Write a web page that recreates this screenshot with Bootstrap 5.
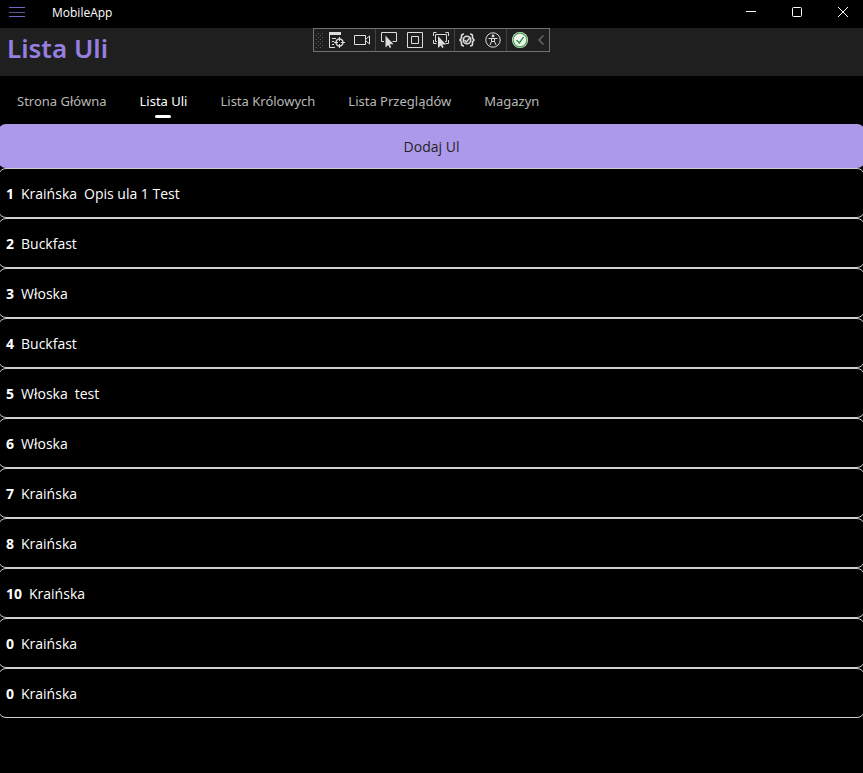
<!DOCTYPE html>
<html lang="pl" data-bs-theme="dark">
<head>
<meta charset="utf-8">
<meta name="viewport" content="width=device-width, initial-scale=1">
<title>MobileApp</title>
<link href="https://cdn.jsdelivr.net/npm/bootstrap@5.3.0/dist/css/bootstrap.min.css" rel="stylesheet">
<style>
body { background: #000; color: #fff; font-family: "Open Sans", "Noto Sans", sans-serif; font-size: 14px; line-height: 20px; }
svg { display: block; }
.icon-btn { background: none; border: 0; padding: 0; color: inherit; display: flex; align-items: center; justify-content: center; }
.title-bar { height: 28px; }
.menu-btn { width: 34px; height: 24px; color: #7a62c4; }
.app-name { font-size: 12px; line-height: 26px; margin-left: 18px; }
.win-btns { gap: 6px; }
.win-btn { width: 40px; height: 24px; }
.page-head { background: #1f1f1f; height: 48px; padding: 0 7px; }
.page-head h1 { color: #967fe0; font-size: 26px; line-height: 40px; font-weight: 600; font-family: "Noto Sans", sans-serif; }
.debug-bar { top: 0; height: 24px; width: 237px; background: #1f1f1f; border: 1px solid #707070; color: #dcdcdc; }
.debug-bar .icon-btn { width: 26px; height: 22px; flex: none; }
.debug-bar .icon-btn:first-of-type { width: 25px; }
.debug-bar .rule { width: 1px; height: 22px; background: #424242; }
.tabs { height: 48px; padding: 0 1px; gap: 1px; }
.tabs .nav-link { color: #b8b8b8; font-family: "Noto Sans", sans-serif; font-size: 13px; padding: 15px 16px 0; height: 48px; position: relative; }
.tabs .nav-link.active { color: #fff; }
.tabs .nav-link.active::after { content: ""; position: absolute; left: calc(50% - 8px); bottom: 6px; width: 16px; height: 3px; border-radius: 2px; background: #fff; }
.hive-area { overflow: hidden; }
.hive-area > * { margin: 0 -2px; }
.add-btn { background: #ac99ea; color: #242424; border: 0; border-radius: 8px; height: 44px; padding: 2px 0 0; font-size: 14px; line-height: 20px; width: calc(100% + 4px); }
.add-btn:hover { background: #b8a8ee; color: #242424; }
.hive { height: 50px; border: 1px solid #d0d0d0; border-radius: 8px; padding: 2px 7px 0; gap: 7px; }
</style>
</head>
<body>
<header>
  <div class="title-bar d-flex align-items-start">
    <button class="icon-btn menu-btn" type="button" aria-label="Menu"><svg width="16" height="12" fill="none" stroke="currentColor"><path d="M0 1.500h16M0 10.500h16"/><path d="M0 6.500h16" opacity=".8"/></svg></button>
    <span class="app-name">MobileApp</span>
    <div class="win-btns d-flex ms-auto">
      <button class="icon-btn win-btn" type="button" aria-label="Minimalizuj"><svg width="10" height="10" stroke="#fff"><path d="M0 4.500h10"/></svg></button>
      <button class="icon-btn win-btn" type="button" aria-label="Maksymalizuj"><svg width="10" height="10" fill="none" stroke="#fff"><rect x=".5" y=".5" width="9" height="9" rx="1"/></svg></button>
      <button class="icon-btn win-btn" type="button" aria-label="Zamknij"><svg width="10" height="10" stroke="#fff"><path d="M0 0l10 10M10 0L0 10"/></svg></button>
    </div>
  </div>
  <div class="page-head position-relative">
    <h1 class="m-0">Lista Uli</h1>
    <div class="debug-bar position-absolute start-0 end-0 mx-auto d-flex align-items-center" role="toolbar" aria-label="Narzędzia">
      <svg class="flex-shrink-0" width="10" height="22" fill="#5a5a5a"><defs><pattern id="grip" width="4" height="4" patternUnits="userSpaceOnUse"><rect width="1" height="1"/><rect x="2" y="2" width="1" height="1"/></pattern></defs><rect x="2" y="3" width="7" height="17" fill="url(#grip)"/></svg>
      <button class="icon-btn" type="button" aria-label="Drzewo wizualne"><svg width="16" height="16" fill="none" stroke="currentColor"><path d="M.5 3v12.500H6M3 6.500h4M3 9.500h2M3 12.500h2"/><path d="M0 1.500h12" stroke-width="3"/><circle cx="10.500" cy="10.500" r="3.500" stroke-width="1.400"/><path d="M10.500 5v4M10.500 12v4M5 10.500h4M12 10.500h4"/></svg></button>
      <button class="icon-btn" type="button" aria-label="Kamera"><svg width="16" height="16" fill="none" stroke="currentColor"><path d="M.5 3.500h11v9H.5zM12 7l3.500-3v8L12 9"/></svg></button>
      <span class="rule"></span>
      <button class="icon-btn" type="button" aria-label="Wybierz element"><svg width="16" height="16" fill="none" stroke="currentColor"><path d="M3 9.500H.5v-9h15v9h-4"/><path d="M4.500 3.500v12l2.700-2.500 1.500 3 1.500-.8-1.500-2.900h3.800z" fill="currentColor" stroke="none"/></svg></button>
      <button class="icon-btn" type="button" aria-label="Obramowania"><svg width="16" height="16" fill="none" stroke="currentColor"><path d="M.5.500h15v15H.5zM4.500 4.500h7v7h-7z"/></svg></button>
      <button class="icon-btn" type="button" aria-label="Śledź fokus"><svg width="16" height="16" fill="none" stroke="currentColor"><path d="M.5 4V.500h3M12.500.500h3V4M.5 8v3.500h3M12.500 11.500h3V8M4 9.500H2.500v-7h11v7H12"/><path d="M5 4v12l2.700-2.500 1.500 2.500 1.500-.8-1.500-2.700H13z" fill="currentColor" stroke="none"/></svg></button>
      <span class="rule"></span>
      <button class="icon-btn" type="button" aria-label="Błędy powiązań"><svg width="16" height="16" fill="none" stroke="currentColor" stroke-width="1.600"><path d="M5 2Q2.500 2 2.500 4v2L1 8l1.500 2v2q0 2 2.500 2M11 2q2.500 0 2.500 2v2L15 8l-1.500 2v2q0 2-2.500 2"/><circle cx="8" cy="8" r="3.700"/><path d="M5.500 8l2 2 3-4" stroke-width="1.300"/></svg></button>
      <button class="icon-btn" type="button" aria-label="Ułatwienia dostępu"><svg width="16" height="16" fill="none" stroke="currentColor"><circle cx="8" cy="8" r="7.200"/><circle cx="8" cy="4" r="1.400" fill="currentColor" stroke="none"/><path d="M3.500 6.500h9M6.500 6.500v3L5 13M9.500 6.500v3L11 13M6.500 9.500h3"/></svg></button>
      <span class="rule"></span>
      <button class="icon-btn" type="button" aria-label="Hot Reload"><svg width="16" height="16" fill="none"><circle cx="8" cy="8" r="8" fill="#f0f4f0"/><circle cx="8" cy="8" r="6.800" stroke="#43a547" stroke-width="1.200"/><path d="M4.500 8l2.800 3 4.200-6" stroke="#3a9b41" stroke-width="1.500"/></svg></button>
      <button class="icon-btn flex-shrink-1" type="button" aria-label="Zwiń"><svg width="6" height="10" fill="none" stroke="#6a6a6a" stroke-width="1.400"><path d="M5.500.500L1 5l4.500 4.500"/></svg></button>
    </div>
  </div>
  <nav class="tabs nav flex-nowrap text-nowrap" aria-label="Główna">
    <a class="nav-link" href="#">Strona Główna</a>
    <a class="nav-link active" aria-current="page" href="#">Lista Uli</a>
    <a class="nav-link" href="#">Lista Królowych</a>
    <a class="nav-link" href="#">Lista Przeglądów</a>
    <a class="nav-link" href="#">Magazyn</a>
  </nav>
</header>
<main class="hive-area">
  <button class="btn add-btn" type="button">Dodaj Ul</button>
  <ul class="list-unstyled">
    <li class="hive d-flex align-items-center"><b>1</b><span>Kraińska</span><span>Opis ula 1 Test</span></li>
    <li class="hive d-flex align-items-center"><b>2</b><span>Buckfast</span></li>
    <li class="hive d-flex align-items-center"><b>3</b><span>Włoska</span></li>
    <li class="hive d-flex align-items-center"><b>4</b><span>Buckfast</span></li>
    <li class="hive d-flex align-items-center"><b>5</b><span>Włoska</span><span>test</span></li>
    <li class="hive d-flex align-items-center"><b>6</b><span>Włoska</span></li>
    <li class="hive d-flex align-items-center"><b>7</b><span>Kraińska</span></li>
    <li class="hive d-flex align-items-center"><b>8</b><span>Kraińska</span></li>
    <li class="hive d-flex align-items-center"><b>10</b><span>Kraińska</span></li>
    <li class="hive d-flex align-items-center"><b>0</b><span>Kraińska</span></li>
    <li class="hive d-flex align-items-center"><b>0</b><span>Kraińska</span></li>
  </ul>
</main>
<script src="https://cdn.jsdelivr.net/npm/bootstrap@5.3.0/dist/js/bootstrap.bundle.min.js"></script>
</body>
</html>
